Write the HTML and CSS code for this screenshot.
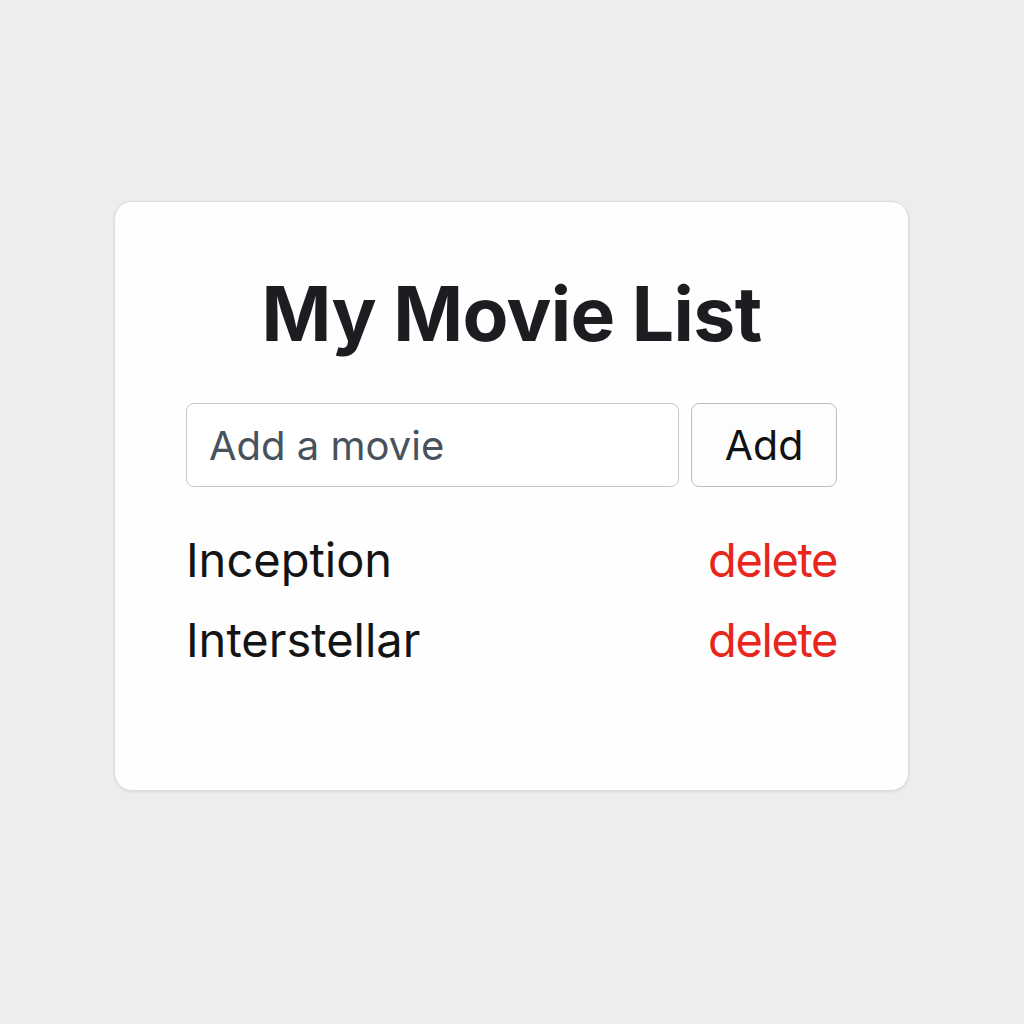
FILE: index.html
```html
<!DOCTYPE html>
<html>
<head>
<meta charset="utf-8">
<link rel="stylesheet" href="styles.css">
</head>
<body>
<main class="page">
  <section class="card">
    <h1 class="title">My Movie List</h1>
    <form class="add-row">
      <input class="movie-input" type="text" placeholder="Add a movie">
      <button class="add-btn" type="button">Add</button>
    </form>
    <ul class="movies">
      <li class="movie"><span class="movie-name">Inception</span><span class="delete">delete</span></li>
      <li class="movie"><span class="movie-name">Interstellar</span><span class="delete">delete</span></li>
    </ul>
  </section>
</main>
</body>
</html>
```
FILE: styles.css
```css
html, body {
  margin: 0;
  padding: 0;
  background: #ededed;
  font-family: Inter, "Noto Sans", sans-serif;
}
.page {
  width: 1024px;
  height: 1024px;
  padding-top: 201px;
  padding-left: 114px;
  box-sizing: border-box;
}
.card {
  width: 795px;
  height: 590px;
  box-sizing: border-box;
  background: #fefefe;
  border: 1px solid #dcdcdc;
  border-radius: 18px;
  box-shadow: 0 1px 3px rgba(0,0,0,0.08);
  padding: 66px 71px 0 71px;
}
.title {
  margin: 0;
  text-align: center;
  font-size: 75px;
  font-weight: 700;
  line-height: 92px;
  color: #1c1d21;
  letter-spacing: -0.6px;
}
.add-row {
  display: flex;
  gap: 12px;
  margin-top: 43px;
}
.movie-input {
  flex: 1;
  width: 0;
  min-width: 0;
  height: 84px;
  box-sizing: border-box;
  border: 1.5px solid #c6c6c6;
  border-radius: 8px;
  padding: 0 22px;
  font-family: Inter, "Noto Sans", sans-serif;
  font-size: 40px;
  color: #333;
  background: #fff;
  outline: none;
}
.movie-input::placeholder {
  color: #48525c;
}
.add-btn {
  flex: none;
  width: 146px;
  height: 84px;
  box-sizing: border-box;
  border: 1.5px solid #bdbdbd;
  border-radius: 8px;
  background: #fdfdfd;
  font-family: Inter, "Noto Sans", sans-serif;
  font-size: 41px;
  color: #111;
  padding: 0;
}
.movies {
  list-style: none;
  margin: 33px 0 0 0;
  padding: 0;
}
.movie {
  display: flex;
  justify-content: space-between;
  align-items: baseline;
  font-size: 47px;
  line-height: 80px;
}
.movie-name {
  color: #141414;
}
.delete {
  color: #e8261c;
  letter-spacing: -1.4px;
}
```
